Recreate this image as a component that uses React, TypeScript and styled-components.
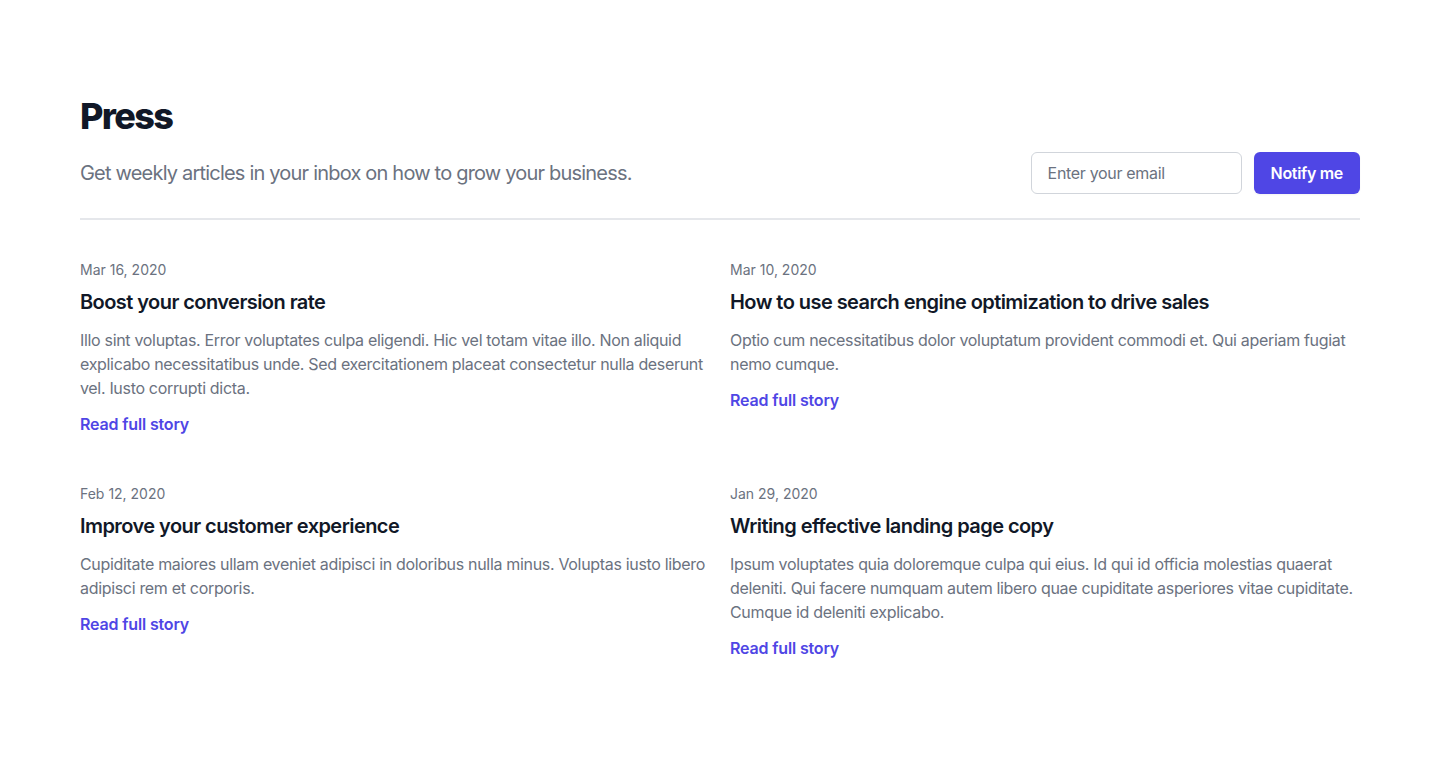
import { createGlobalStyle } from 'styled-components';
import styled from 'styled-components';

const GlobalStyle = createGlobalStyle`
  body {
    margin: 0;
    background: #ffffff;
    font-family: Inter, 'Noto Sans', sans-serif;
    -webkit-font-smoothing: antialiased;
  }
  * { box-sizing: border-box; }
`;

const Section = styled.div`
  background: #ffffff;
  padding: 96px 80px 112px;
`;

const Container = styled.div`
  max-width: 1280px;
  margin: 0 auto;
`;

const Title = styled.h2`
  margin: 0;
  font-size: 36px;
  line-height: 40px;
  font-weight: 800;
  letter-spacing: -0.045em;
  color: #111827;
`;

const IntroRow = styled.div`
  margin-top: 16px;
  display: grid;
  grid-template-columns: 1fr 1fr;
  gap: 20px;
  align-items: center;
`;

const Lead = styled.p`
  margin: 0;
  font-size: 20px;
  line-height: 28px;
  letter-spacing: -0.04em;
  color: #6b7280;
`;

const Form = styled.form`
  display: flex;
  justify-content: flex-end;
`;

const EmailInput = styled.input`
  appearance: none;
  width: 211px;
  padding: 8px 16px;
  border: 1px solid #d1d5db;
  border-radius: 6px;
  font-family: inherit;
  font-size: 16px;
  line-height: 24px;
  letter-spacing: -0.02em;
  color: #111827;
  background: #ffffff;
  &::placeholder { color: #6b7280; }
  &:focus { outline: none; border-color: #6366f1; }
`;

const NotifyButton = styled.button`
  margin-left: 12px;
  flex-shrink: 0;
  display: inline-flex;
  align-items: center;
  justify-content: center;
  padding: 8px 16px;
  border: 1px solid transparent;
  border-radius: 6px;
  background: #4f46e5;
  color: #ffffff;
  font-family: inherit;
  font-size: 16px;
  line-height: 24px;
  font-weight: 600;
  letter-spacing: -0.02em;
  box-shadow: 0 1px 2px rgba(0, 0, 0, 0.05);
  cursor: pointer;
  &:hover { background: #4338ca; }
`;

const PostGrid = styled.div`
  margin-top: 24px;
  padding-top: 40px;
  border-top: 2px solid #e5e7eb;
  display: grid;
  grid-template-columns: 1fr 1fr;
  column-gap: 20px;
  row-gap: 48px;
`;

const DateLine = styled.p`
  margin: 0;
  font-size: 14px;
  line-height: 20px;
  color: #6b7280;
`;

const PostLink = styled.a`
  display: block;
  margin-top: 8px;
  text-decoration: none;
`;

const PostTitle = styled.p`
  margin: 0;
  font-size: 20px;
  line-height: 28px;
  font-weight: 600;
  letter-spacing: -0.028em;
  color: #111827;
`;

const Excerpt = styled.p`
  margin: 12px 0 0;
  font-size: 16px;
  line-height: 24px;
  letter-spacing: -0.02em;
  color: #6b7280;
`;

const ReadMore = styled.div`
  margin-top: 12px;
`;

const ReadLink = styled.a`
  font-size: 16px;
  line-height: 24px;
  font-weight: 600;
  letter-spacing: -0.01em;
  color: #4f46e5;
  text-decoration: none;
  &:hover { color: #6366f1; }
`;

const posts = [
  {
    date: 'Mar 16, 2020',
    title: 'Boost your conversion rate',
    body: 'Illo sint voluptas. Error voluptates culpa eligendi. Hic vel totam vitae illo. Non aliquid explicabo necessitatibus unde. Sed exercitationem placeat consectetur nulla deserunt vel. Iusto corrupti dicta.',
  },
  {
    date: 'Mar 10, 2020',
    title: 'How to use search engine optimization to drive sales',
    body: 'Optio cum necessitatibus dolor voluptatum provident commodi et. Qui aperiam fugiat nemo cumque.',
  },
  {
    date: 'Feb 12, 2020',
    title: 'Improve your customer experience',
    body: 'Cupiditate maiores ullam eveniet adipisci in doloribus nulla minus. Voluptas iusto libero adipisci rem et corporis.',
  },
  {
    date: 'Jan 29, 2020',
    title: 'Writing effective landing page copy',
    body: 'Ipsum voluptates quia doloremque culpa qui eius. Id qui id officia molestias quaerat deleniti. Qui facere numquam autem libero quae cupiditate asperiores vitae cupiditate. Cumque id deleniti explicabo.',
  },
];

const App = () => (
  <>
    <GlobalStyle />
    <Section>
      <Container>
        <div>
          <Title>Press</Title>
          <IntroRow>
            <Lead>Get weekly articles in your inbox on how to grow your business.</Lead>
            <Form onSubmit={(e) => e.preventDefault()}>
              <EmailInput type='email' placeholder='Enter your email' aria-label='Email address' />
              <NotifyButton type='button'>Notify me</NotifyButton>
            </Form>
          </IntroRow>
        </div>
        <PostGrid>
          {posts.map((p) => (
            <div key={p.title}>
              <DateLine>
                <time>{p.date}</time>
              </DateLine>
              <PostLink href='#'>
                <PostTitle>{p.title}</PostTitle>
                <Excerpt>{p.body}</Excerpt>
              </PostLink>
              <ReadMore>
                <ReadLink href='#'>Read full story</ReadLink>
              </ReadMore>
            </div>
          ))}
        </PostGrid>
      </Container>
    </Section>
  </>
);

export default App;
